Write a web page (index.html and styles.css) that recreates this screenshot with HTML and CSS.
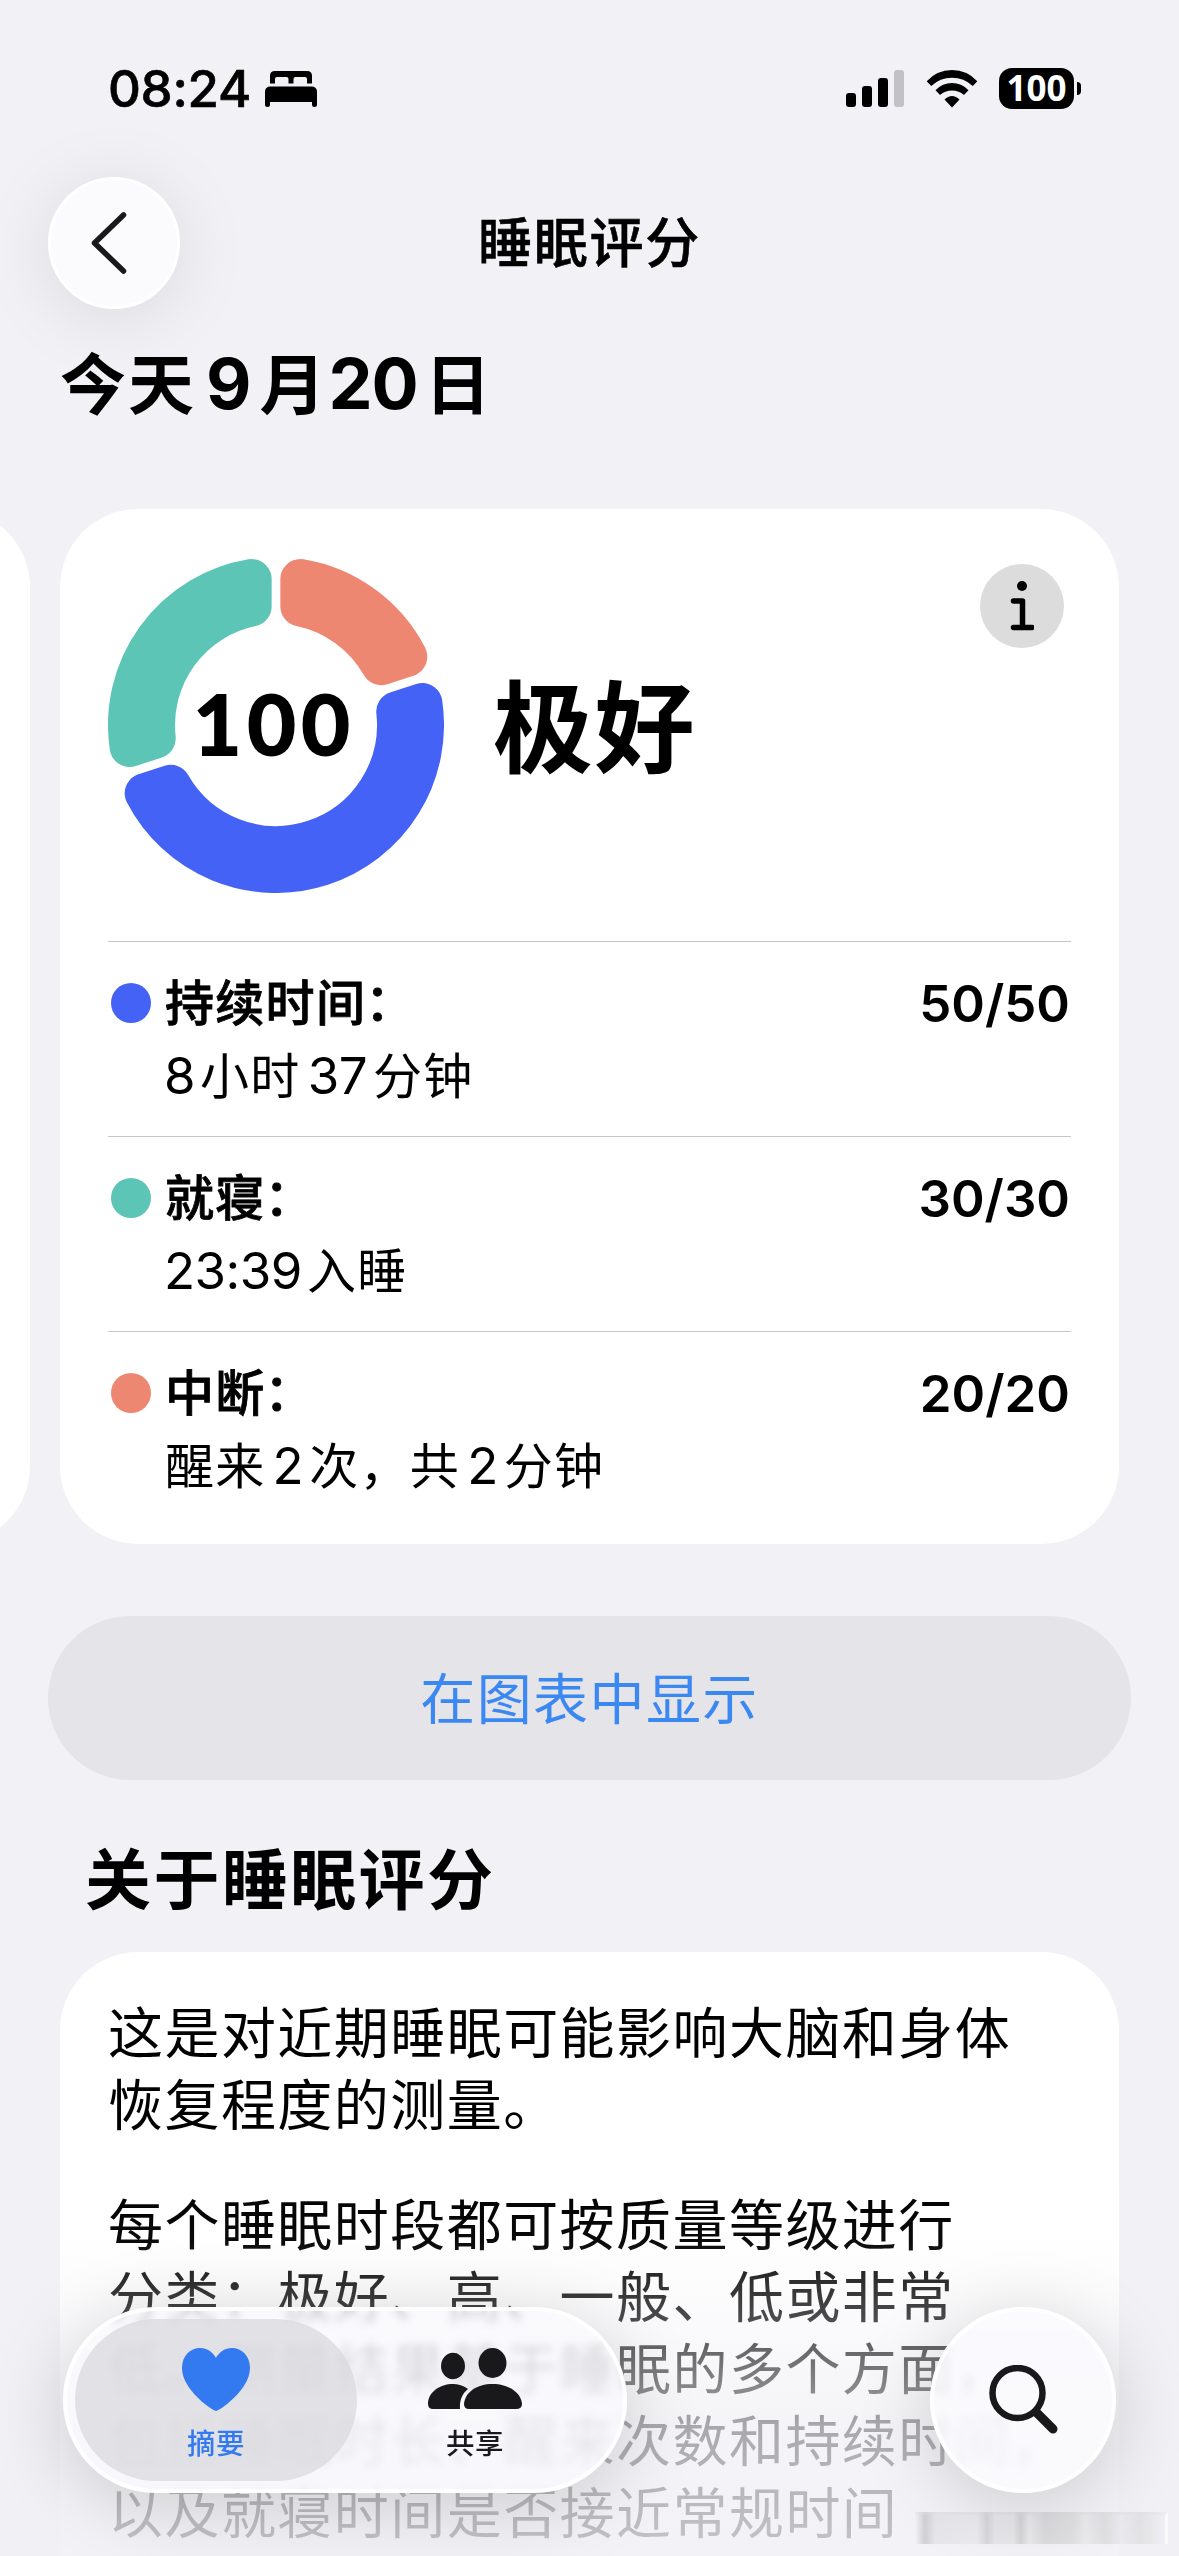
FILE: index.html
```html
<!DOCTYPE html>
<html lang="zh-CN">
<head>
<meta charset="utf-8">
<title>睡眠评分</title>
<link rel="stylesheet" href="styles.css">
</head>
<body>
<div class="screen">
  <div class="status">
    <div class="status-left">
      <span class="clock">08:24</span>
      <svg class="bed" viewBox="0 0 52 36" width="52" height="36"><path d="M5 12.500V5Q5 0 10 0H42Q47 0 47 5V12.500H42V8Q42 6 40 6H30.500Q28.500 6 28.500 8V12.500H23.500V8Q23.500 6 21.500 6H12Q10 6 10 8V12.500ZM0 21Q0 15.500 5.500 15.500H46.500Q52 15.500 52 21V33.500Q52 36 49.500 36Q47 36 47 33.500V31H5V33.500Q5 36 2.500 36Q0 36 0 33.500Z"/></svg>
    </div>
    <div class="status-right">
      <svg viewBox="0 0 58 37" width="58" height="37"><rect y="23" width="10" height="14" rx="3"/><rect x="16" y="16" width="10" height="21" rx="3"/><rect x="32" y="8" width="10" height="29" rx="3"/><rect x="48" width="10" height="37" rx="3" fill="#c1c1c6"/></svg>
      <svg class="wifi" viewBox="0 0 52 38" width="52" height="38"><path d="M0.700 11.300Q11 0 26 0T51.300 11.300L46.800 16Q38 7.700 26 7.700T5.200 16ZM9.500 20.200Q16.500 13 26 13T42.500 20.200L38 25Q33 20.500 26 20.500T14 25ZM18.500 29.500Q22 26 26 26T33.500 29.500L26 37.500Z"/></svg>
      <div class="battery"><span class="cell">100</span><span class="nub"></span></div>
    </div>
  </div>

  <header class="nav">
    <button class="back" aria-label="返回"><svg viewBox="0 0 36 62" width="36" height="62"><path d="M32.500 3L3.500 31L32.500 59"/></svg></button>
    <div class="nav-title">睡眠评分</div>
  </header>

  <h1 class="date">今天<span class="n9">9</span>月<span class="n20">20</span>日</h1>

  <div class="carousel">
    <div class="card previous"></div>
    <section class="card score">
      <div class="summary">
        <div class="ring">
          <svg viewBox="-168 -168 336 336" width="336" height="336">
            <path class="seg coral" d="M24.350-145.980A148 148 0 0 1 131.320-68.270L105.200-59.780A121 121 0 0 0 24.350-118.520Z"/>
            <path class="seg blue" d="M146.360-21.950A148 148 0 0 1-131.320 68.270L-105.200 59.780A121 121 0 0 0 120.240-13.460Z"/>
            <path class="seg teal" d="M-146.360 21.950A148 148 0 0 1-24.350-145.980L-24.350-118.520A121 121 0 0 0-120.240 13.460Z"/>
          </svg>
          <span class="total">100</span>
        </div>
        <div class="grade">极好</div>
        <div class="info"><svg viewBox="0 0 24 50" width="24" height="50"><circle cx="12" cy="5" r="5"/><path d="M3.500 20H12.500V46M3.500 46.500H22"/></svg></div>
      </div>
      <div class="row">
        <span class="dot dot-blue"></span>
        <div class="detail"><div class="label">持续时间<span class="colon">：</span></div><div class="value"><span class="num first">8</span>小时<span class="num">37</span>分钟</div></div>
        <div class="points">50/50</div>
      </div>
      <div class="row">
        <span class="dot dot-teal"></span>
        <div class="detail"><div class="label">就寝<span class="colon">：</span></div><div class="value"><span class="num first">23:39</span>入睡</div></div>
        <div class="points">30/30</div>
      </div>
      <div class="row">
        <span class="dot dot-coral"></span>
        <div class="detail"><div class="label">中断<span class="colon">：</span></div><div class="value">醒来<span class="num">2</span>次，共<span class="num">2</span>分钟</div></div>
        <div class="points">20/20</div>
      </div>
    </section>
  </div>

  <button class="chart-button">在图表中显示</button>

  <h2 class="about-title">关于睡眠评分</h2>
  <section class="card about">
    <p>这是对近期睡眠可能影响大脑和身体<br>恢复程度的测量。</p>
    <p>每个睡眠时段都可按质量等级进行<br>分类：极好、高、一般、低或非常<br>低。测量结果基于睡眠的多个方面，<br>包括睡眠时长、醒来次数和持续时间，<br>以及就寝时间是否接近常规时间</p>
  </section>

  <div class="fade"></div>
  <div class="smudge"></div>
  <nav class="tabs">
    <div class="pill">
      <div class="tab active">
        <svg viewBox="0 0 68 63" width="68" height="63"><path d="M34 63C31 63 0 42 0 20C0 8 8 0 18 0C25 0 31 4 34 10C37 4 43 0 50 0C60 0 68 8 68 20C68 42 37 63 34 63Z"/></svg>
        <span>摘要</span>
      </div>
      <div class="tab">
        <svg viewBox="0 0 94 63" width="94" height="63"><ellipse cx="25" cy="18" rx="12" ry="13.200"/><ellipse cx="64.500" cy="15" rx="14" ry="15"/><path d="M5 61Q0 61 0 56C0 44 12 36 25 36C31 36 36 38 40 41C34 46 31.500 52 32 61Z"/><path d="M41 61Q36 61 36 56C37 44 49 36 64.500 36S93 44 94 56Q94 61 88 61Z"/></svg>
        <span>共享</span>
      </div>
    </div>
    <div class="search"><svg viewBox="0 0 70 70" width="70" height="70"><circle cx="28.500" cy="28" r="25"/><path d="M47 47L64 64"/></svg></div>
  </nav>
</div>
</body>
</html>
```

FILE: styles.css
```css
* { box-sizing: border-box; margin: 0; padding: 0; }

body {
  background: #f1f1f6;
  color: #000;
  font-family: Inter, "Noto Sans CJK SC", sans-serif;
}

button { border: 0; font: inherit; color: inherit; }
svg { display: block; flex: none; }

.screen {
  position: relative;
  width: 1179px;
  height: 2556px;
  overflow: hidden;
  background: #f1f1f6;
}

/* Status bar */
.status {
  display: flex;
  justify-content: space-between;
  align-items: center;
  height: 177px;
  padding: 0 98px 0 108px;
}
.status-left, .status-right { display: flex; align-items: center; }
.clock { width: 157px; font-size: 51px; font-weight: 500; line-height: 60px; letter-spacing: -0.300px; -webkit-text-stroke: .6px #000; }
.wifi { margin: 0 21px 0 22px; }
.battery { display: flex; align-items: center; gap: 3px; }
.cell {
  width: 75px;
  height: 41px;
  border-radius: 13px;
  background: #000;
  color: #fff;
  font-family: "Noto Sans", sans-serif;
  font-size: 35px;
  font-weight: 700;
  line-height: 40px;
  text-align: center;
}
.nub { width: 4px; height: 13px; background: #000; border-radius: 0 4px 4px 0; }

/* Navigation */
.nav {
  display: grid;
  grid-template-columns: 132px 1fr 132px;
  align-items: center;
  height: 132px;
  padding: 0 48px;
}
.back {
  display: flex;
  align-items: center;
  width: 132px;
  height: 132px;
  padding-left: 40px;
  border: 3px solid #fff;
  border-radius: 50%;
  background: #fbfbfe;
  box-shadow: 0 8px 75px rgba(0, 0, 0, .1);
}
.back svg { fill: none; stroke: #19191c; stroke-width: 5.5; stroke-linecap: round; stroke-linejoin: round; }
.nav-title { padding-top: 2px; text-align: center; font-size: 54px; font-weight: 500; line-height: 72px; letter-spacing: 1.7px; -webkit-text-stroke: .6px #000; }

.date {
  height: 80px;
  margin: 35px 0 85px 60px;
  font-size: 66px;
  font-weight: 700;
  line-height: 80px;
  letter-spacing: 2px;
}
.n9, .n20 { font-size: 70px; letter-spacing: 0; }
.n9 { margin: 0 8px 0 10px; }
.n20 { margin: 0 7px 0 1px; letter-spacing: -1px; }

/* Cards */
.card { background: #fff; border-radius: 78px; }
.carousel { display: flex; gap: 30px; margin-left: -1029px; }
.previous { flex: none; width: 1059px; }
.score { flex: none; width: 1059px; height: 1035px; padding: 48px; }
.summary { display: flex; height: 384px; }
.ring { position: relative; width: 336px; height: 336px; }
.seg { stroke-width: 40; stroke-linejoin: round; }
.coral { fill: #ee8772; stroke: #ee8772; }
.blue { fill: #4562f6; stroke: #4562f6; }
.teal { fill: #5cc5b5; stroke: #5cc5b5; }
.total {
  position: absolute;
  inset: 0 3px 0 0;
  font-family: Lato, sans-serif;
  font-size: 83px;
  font-weight: 700;
  line-height: 333px;
  text-align: center;
  letter-spacing: 6px;
  -webkit-text-stroke: 2px #000;
  paint-order: stroke;
}
.grade {
  flex: 1;
  padding: 4px 0 0 49px;
  font-size: 100px;
  font-weight: 700;
  line-height: 336px;
  letter-spacing: 1.500px;
}
.info {
  display: flex;
  justify-content: center;
  align-items: center;
  width: 84px;
  height: 84px;
  margin: 7px 7px 0 0;
  border-radius: 50%;
  background: #dcdcdd;
}
.info svg path { fill: none; stroke: #000; stroke-width: 5.5; stroke-linecap: round; stroke-linejoin: round; }

.row { display: flex; height: 195px; padding-top: 26px; border-top: 1px solid #c6c6c8; }
.dot { flex: none; width: 40px; height: 40px; margin: 15px 14px 0 3px; border-radius: 50%; }
.dot-blue { background: #4562f6; }
.dot-teal { background: #5cc5b5; }
.dot-coral { background: #ee8772; }
.detail { flex: 1; font-size: 49px; letter-spacing: 1.3px; }
.label { height: 72px; line-height: 72px; font-weight: 500; -webkit-text-stroke: .8px #000; }
.colon { position: relative; top: -1px; left: -1px; }
.value { height: 74px; line-height: 72px; }
.num { margin: 0 6px 0 7px; font-size: 51px; letter-spacing: -0.5px; }
.num.first { margin: 0 5px 0 -1px; }
.points { height: 72px; line-height: 71px; padding-right: 1px; font-size: 51px; font-weight: 600; }

.chart-button {
  display: block;
  width: 1083px;
  height: 164px;
  margin: 72px 48px 60px;
  padding-bottom: 6px;
  border-radius: 82px;
  background: #e4e4e9;
  color: #3b88f2;
  font-size: 55px;
  letter-spacing: 1.400px;
}
.about-title { height: 80px; margin: 0 0 32px 85px; font-size: 66px; font-weight: 700; line-height: 80px; letter-spacing: 2.400px; }
.about {
  width: 1059px;
  height: 700px;
  margin-left: 60px;
  padding: 45px 48px;
  font-size: 55px;
  line-height: 72px;
  letter-spacing: 1.450px;
  white-space: nowrap;
}
.about p { margin-bottom: 48px; }

/* Floating tab bar and the fade beneath it */
.fade {
  position: absolute;
  left: 0;
  right: 0;
  bottom: 0;
  height: 376px;
  background: linear-gradient(rgba(240, 240, 245, 0) 0, rgba(240, 240, 245, .04) 60px, rgba(240, 240, 245, .16) 91px, rgba(240, 240, 245, .33) 143px, rgba(240, 240, 245, .5) 190px, rgba(240, 240, 245, .7) 245px, rgba(240, 240, 245, .77) 310px, rgba(240, 240, 245, .82) 100%);
}
.smudge {
  position: absolute;
  left: 915px;
  top: 2512px;
  width: 253px;
  height: 32px;
  border-top: 3px solid rgba(225, 225, 229, .4);
  border-right: 3px solid #fafafa;
  background: linear-gradient(90deg, transparent, #d0d0d4 10px, #e6e6ea 20px, #ececf0 62px, #d8d8db 72px, #e8e8ec 80px, #e8e8eb 98px, #d6d6d9 106px, #ebebee 114px, #dcdcdf 130px, #e0e0e3 158px, #ebebee 170px, #dfdfe2 190px, #ebebef 206px, #e2e2e5 225px, #efeff3);
}
.tabs {
  position: absolute;
  left: 63px;
  right: 63px;
  bottom: 63px;
  display: flex;
  justify-content: space-between;
  height: 186px;
}
.pill, .search {
  border: 4px solid rgba(255, 255, 255, .9);
  background: rgba(250, 250, 254, .75);
  backdrop-filter: blur(4px);
  box-shadow: 0 12px 75px rgba(0, 0, 0, .17);
}
.search { background: rgba(250, 250, 254, .86); }
.pill { display: flex; width: 564px; padding: 8px; border-radius: 93px; }
.tab {
  display: flex;
  flex: none;
  flex-direction: column;
  align-items: center;
  width: 282px;
  padding-top: 29px;
  border-radius: 81px;
  color: #19191c;
  fill: #19191c;
}
.tab + .tab { width: 236px; }
.tab.active { background: rgba(218, 218, 222, .75); color: #337af0; fill: #337af0; }
.tab span { margin-top: 12px; font-size: 28.500px; font-weight: 500; line-height: 41px; letter-spacing: .5px; }
.search { width: 186px; border-radius: 50%; padding: 54px 0 0 55px; }
.search svg { fill: none; stroke: #19191c; stroke-width: 6.500; }
.search svg path { stroke-width: 9; stroke-linecap: round; }
```
